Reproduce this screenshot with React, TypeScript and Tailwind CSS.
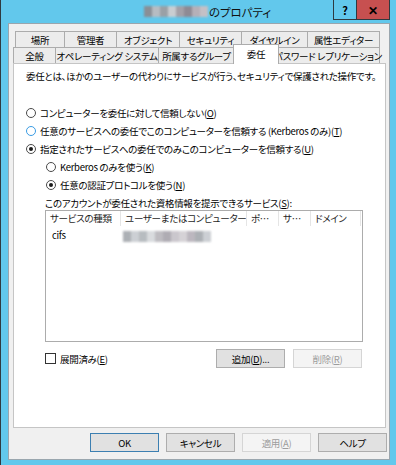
import React from 'react';

const FONT = "font-['Noto_Sans_CJK_JP','Noto_Sans',sans-serif] [font-feature-settings:'palt']";

function Blur({ w }: { w: number }) {
  // pixelated/blurred name placeholder
  const blocks = ['#8a8f96', '#b7bcc2', '#9aa0a6', '#c9cdd1', '#a3a0a8', '#8e8a94', '#b5b0b8', '#c4c0c6', '#a09aa4'];
  const n = Math.round(w / 8);
  return (
    <span className="inline-flex h-[11px] blur-[1px] align-middle">
      {Array.from({ length: n }).map((_, i) => (
        <span key={i} className="w-[8px] h-[11px]" style={{ backgroundColor: blocks[i % blocks.length] }} />
      ))}
    </span>
  );
}

function Radio({ checked, focus, children }: { checked?: boolean; focus?: boolean; children: React.ReactNode }) {
  return (
    <div className="flex items-center h-[18px] gap-[4px] whitespace-nowrap">
      <span
        className={`w-[10px] h-[10px] rounded-full border bg-white flex items-center justify-center ${
          focus ? 'border-[#3a9ce4]' : 'border-[#4a4a4a]'
        }`}
      >
        {checked && <span className="w-[4px] h-[4px] rounded-full bg-[#1a1a1a]" />}
      </span>
      <span>{children}</span>
    </div>
  );
}

function Btn({ children, disabled, primary, w = 69 }: { children: React.ReactNode; disabled?: boolean; primary?: boolean; w?: number }) {
  return (
    <div
      className={`h-[19px] flex items-center justify-center border whitespace-nowrap ${
        disabled
          ? 'bg-[#f4f4f4] border-[#d5d5d5] text-[#9d9d9d]'
          : primary
          ? 'bg-[#e1e1e1] border-[#3c7fb1] text-black'
          : 'bg-[#e1e1e1] border-[#adadad] text-black'
      }`}
      style={{ width: w }}
    >
      {children}
    </div>
  );
}

const row1 = [
  { label: '場所', w: 50 },
  { label: '管理者', w: 52 },
  { label: 'オブジェクト', w: 63 },
  { label: 'セキュリティ', w: 62 },
  { label: 'ダイヤルイン', w: 66 },
  { label: '属性エディター', w: 72 },
];

const row2 = [
  { label: '全般', w: 43 },
  { label: 'オペレーティング システム', w: 103 },
  { label: '所属するグループ', w: 76 },
  { label: '委任', w: 42, active: true },
  { label: 'パスワード レプリケーション', w: 103 },
];

export default function App() {
  return (
    <div className={`w-[396px] h-[465px] bg-[#62c8ec] border-l border-[#2f3a40] relative text-[9.5px] tracking-[-0.3px] leading-[14px] text-black ${FONT}`}>
      {/* Title bar */}
      <div className="h-[23px] flex items-center justify-center text-[11.5px] tracking-normal text-[#111] pl-[18px]">
        <Blur w={64} />
        <span className="ml-[1px]">のプロパティ</span>
      </div>
      <div className="absolute top-0 left-[332px] flex">
        <div className="w-[24px] h-[20px] bg-[#62c8ec] border border-[#2e3a40] border-t-0 flex items-center justify-center text-[11px] font-bold">
          ?
        </div>
        <div className="w-[33px] h-[20px] bg-[#c75050] border border-[#2e3a40] border-t-0 border-l-0 flex items-center justify-center text-[12px] font-bold">
          ✕
        </div>
      </div>

      {/* Client area */}
      <div className="ml-[7px] w-[382px] h-[437px] bg-[#f0f0f0] border border-[#9aa6ae] flex flex-col">
        {/* Tabs */}
        <div className="pt-[7px]">
          <div className="flex ml-[6px] h-[16px]">
            {row1.map((t, i) => (
              <div
                key={t.label}
                className={`h-[16px] flex items-center justify-center whitespace-nowrap bg-[#ececec] border border-b-0 border-[#acacac] ${i > 0 ? 'border-l-0' : ''}`}
                style={{ width: t.w }}
              >
                {t.label}
              </div>
            ))}
          </div>
          <div className="flex ml-[4px] h-[16px] relative z-10">
            {row2.map((t, i) =>
              t.active ? (
                <div
                  key={t.label}
                  className="h-[20px] -mt-[3px] -mx-[2px] flex items-start pt-[2px] justify-center whitespace-nowrap bg-white border border-b-0 border-[#acacac] relative z-10"
                  style={{ width: t.w + 4 }}
                >
                  {t.label}
                </div>
              ) : (
                <div
                  key={t.label}
                  className={`h-[16px] flex items-center justify-center whitespace-nowrap bg-[#ececec] border border-b-0 border-[#acacac] ${i > 0 ? 'border-l-0' : ''}`}
                  style={{ width: t.w }}
                >
                  {t.label}
                </div>
              ),
            )}
          </div>
        </div>

        {/* Tab panel */}
        <div className="ml-[4px] w-[373px] h-[365px] bg-white border border-[#c5c5c5] pl-[12px] pt-[5px]">
          <div className="h-[14px] whitespace-nowrap">委任とは、ほかのユーザーの代わりにサービスが行う、セキュリティで保護された操作です。</div>
          <div className="mt-[21px]">
            <Radio>
              コンピューターを委任に対して信頼しない(<u>O</u>)
            </Radio>
            <Radio focus>
              任意のサービスへの委任でこのコンピューターを信頼する (Kerberos のみ)(<u>T</u>)
            </Radio>
            <Radio checked>
              指定されたサービスへの委任でのみこのコンピューターを信頼する(<u>U</u>)
            </Radio>
            <div className="ml-[20px]">
              <Radio>
                Kerberos のみを使う(<u>K</u>)
              </Radio>
              <Radio checked>
                任意の認証プロトコルを使う(<u>N</u>)
              </Radio>
            </div>
          </div>

          <div className="ml-[19px]">
            <div className="mt-[2px] h-[14px] whitespace-nowrap">
              このアカウントが委任された資格情報を提示できるサービス(<u>S</u>):
            </div>
            {/* List view */}
            <div className="w-[318px] h-[132px] border border-[#acacac] bg-white">
              <div className="flex h-[15px] text-[#1e1e1e] whitespace-nowrap">
                <div className="w-[75px] pl-[4px] border-r border-[#e5e5e5] overflow-hidden">サービスの種類</div>
                <div className="w-[126px] pl-[4px] border-r border-[#e5e5e5] overflow-hidden">ユーザーまたはコンピューター</div>
                <div className="w-[32px] pl-[4px] border-r border-[#e5e5e5] overflow-hidden">ポ…</div>
                <div className="w-[32px] pl-[4px] border-r border-[#e5e5e5] overflow-hidden">サ…</div>
                <div className="w-[50px] pl-[4px] border-r border-[#e5e5e5] overflow-hidden">ドメイン</div>
              </div>
              <div className="flex h-[16px] items-center mt-[1px]">
                <div className="w-[75px] pl-[6px]">cifs</div>
                <div className="pl-[2px] opacity-70">
                  <Blur w={88} />
                </div>
              </div>
            </div>

            <div className="flex items-center mt-[7px] w-[318px]">
              <div className="flex items-center gap-[4px] flex-1">
                <span className="w-[11px] h-[11px] border border-[#333] bg-white" />
                <span>
                  展開済み(<u>E</u>)
                </span>
              </div>
              <div className="flex gap-[8px] mr-[1px]">
                <Btn>
                  追加(<u>D</u>)...
                </Btn>
                <Btn disabled>
                  削除(<u>R</u>)
                </Btn>
              </div>
            </div>
          </div>
        </div>

        {/* Dialog buttons */}
        <div className="flex justify-end gap-[7px] mt-[5px] mr-[2px]">
          <Btn primary>OK</Btn>
          <Btn>キャンセル</Btn>
          <Btn disabled>
            適用(<u>A</u>)
          </Btn>
          <Btn>ヘルプ</Btn>
        </div>
      </div>
    </div>
  );
}
